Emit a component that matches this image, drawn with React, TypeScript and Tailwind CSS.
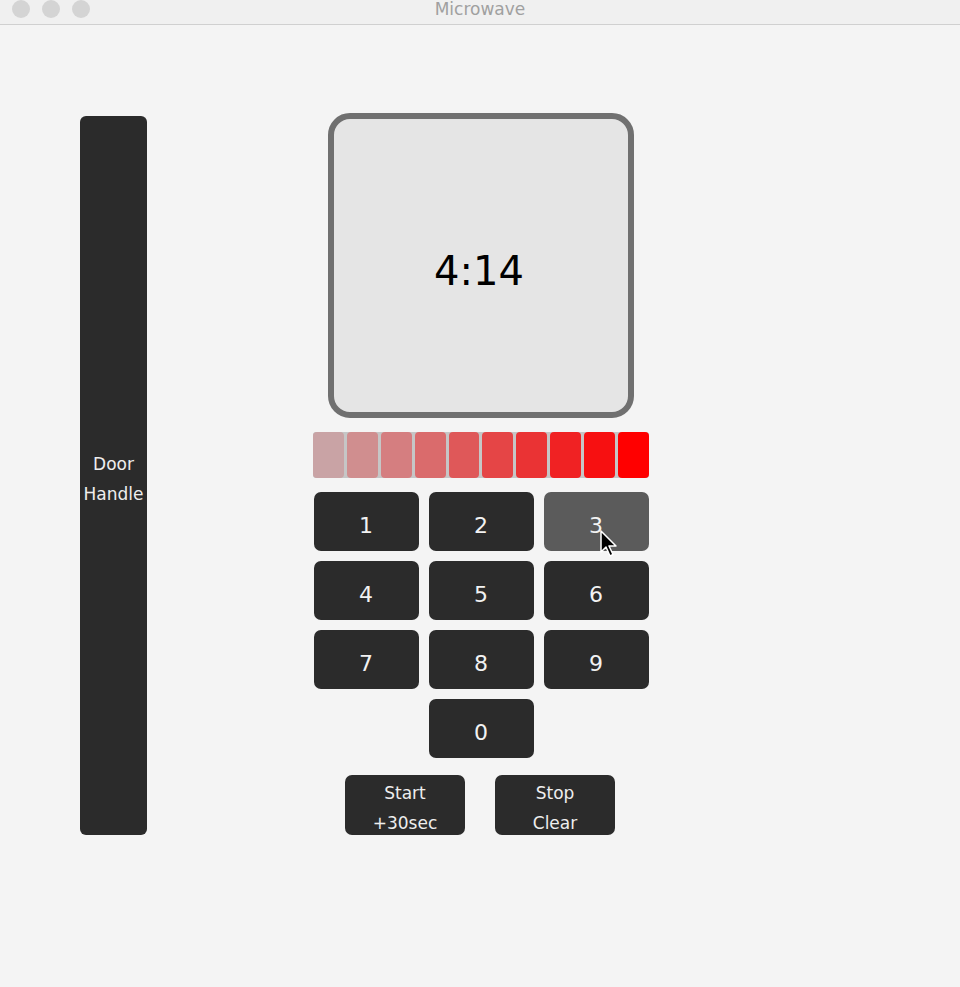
import React from 'react'

const segments = ['#c9a3a5', '#d08e8f', '#d57e80', '#da6b6c', '#df5859', '#e54546', '#ea3334', '#f02223', '#f71011', '#ff0000']

const keys = [
    ['1', '2', '3'],
    ['4', '5', '6'],
    ['7', '8', '9'],
]

function Key({ label, hover }: { label: string; hover?: boolean }) {
    return (
        <div
            className={`flex h-[59px] w-[105px] items-center justify-center rounded-[7px] pt-[8px] text-[22px] text-[#f2f2f2] ${hover ? 'bg-[#5b5b5b]' : 'bg-[#2b2b2b]'}`}
        >
            {label}
        </div>
    )
}

export default function App() {
    return (
        <div
            className="flex h-[987px] w-[960px] flex-col overflow-hidden bg-[#f4f4f4]"
            style={{ fontFamily: '"DejaVu Sans", "Liberation Sans", sans-serif' }}
        >
            {/* title bar */}
            <div className="relative flex h-[25px] shrink-0 items-center justify-center border-b border-[#d0d0d0] bg-[#f0f0f0]">
                <div className="absolute left-[12px] top-0 flex gap-[12px]">
                    <span className="h-[18px] w-[18px] rounded-full bg-[#d4d4d4]" />
                    <span className="h-[18px] w-[18px] rounded-full bg-[#d4d4d4]" />
                    <span className="h-[18px] w-[18px] rounded-full bg-[#d4d4d4]" />
                </div>
                <span className="-mt-[4px] text-[17px] text-[#a0a0a0]">Microwave</span>
            </div>

            <div className="flex flex-1 pl-[80px]">
                {/* door handle */}
                <div className="mt-[91px] flex h-[719px] w-[67px] flex-col items-center justify-center rounded-[6px] bg-[#2b2b2b] pt-[6px] text-[17px] leading-[30px] text-[#eeeeee]">
                    <span>Door</span>
                    <span>Handle</span>
                </div>

                <div className="ml-[166px] mt-[88px] flex w-[336px] flex-col items-center">
                    {/* display */}
                    <div className="flex h-[305px] w-[306px] items-center justify-center rounded-[22px] border-[6px] border-[#707070] bg-[#e5e5e5]">
                        <span className="-ml-[4px] mt-[10px] text-[40px] text-black">4:14</span>
                    </div>

                    {/* power bar */}
                    <div className="mt-[14px] grid h-[46px] w-[336px] grid-cols-10 gap-[3px] rounded-[3px] bg-[#c6c6c6]">
                        {segments.map((c) => (
                            <div key={c} className="rounded-[4px]" style={{ backgroundColor: c }} />
                        ))}
                    </div>

                    {/* keypad */}
                    <div className="relative mt-[14px] flex flex-col gap-[10px]">
                        {keys.map((row) => (
                            <div key={row.join('')} className="flex gap-[10px]">
                                {row.map((k) => (
                                    <Key key={k} label={k} hover={k === '3'} />
                                ))}
                            </div>
                        ))}
                        <div className="flex justify-center">
                            <Key label="0" />
                        </div>

                        {/* mouse pointer */}
                        <svg className="absolute left-[286px] top-[38px]" width="18" height="28" viewBox="0 0 18 28">
                            <path d="M1 1 L1 22 L6 17 L10 26 L13 24.5 L9 16 L16 16 Z" fill="#000" stroke="#fff" strokeWidth="1.5" strokeLinejoin="round" />
                        </svg>
                    </div>

                    {/* start / stop */}
                    <div className="-ml-[2px] mt-[17px] flex gap-[30px]">
                        <div className="flex h-[60px] w-[120px] flex-col items-center justify-center rounded-[7px] bg-[#2b2b2b] pt-[6px] text-[17px] leading-[30px] text-[#eeeeee]">
                            <span>Start</span>
                            <span>+30sec</span>
                        </div>
                        <div className="flex h-[60px] w-[120px] flex-col items-center justify-center rounded-[7px] bg-[#2b2b2b] pt-[6px] text-[17px] leading-[30px] text-[#eeeeee]">
                            <span>Stop</span>
                            <span>Clear</span>
                        </div>
                    </div>
                </div>
            </div>
        </div>
    )
}
